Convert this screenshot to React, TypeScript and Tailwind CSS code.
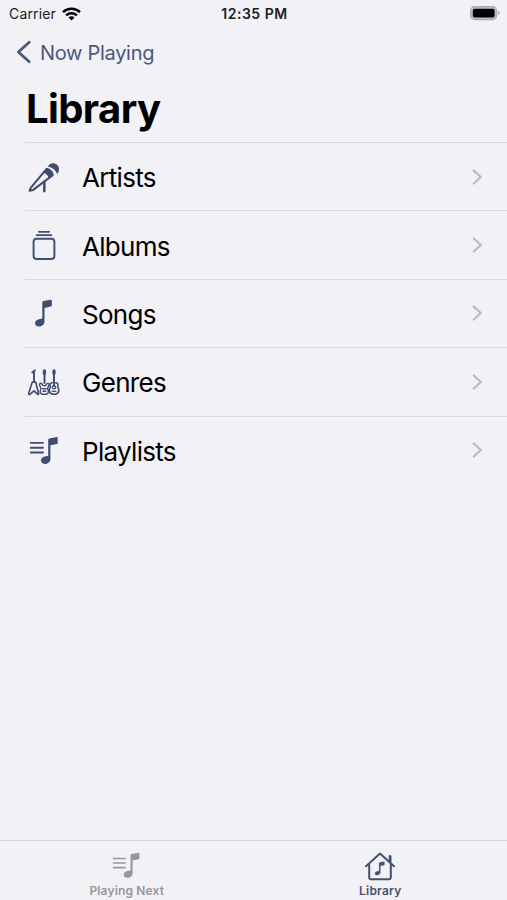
import type { ReactNode } from "react";

const NOTE = "M22.3 12.9 Q22.4 11.9 23.4 11.6 L30.8 10.2 Q31.8 10 31.8 11 L31.8 16 Q31.8 16.9 30.9 17.1 L24.5 18.4 L24.5 32 C24.5 35.3 21.5 37 18.8 37 C16.5 37 15 35.6 15 33.7 C15 31.3 17.3 29.6 20 29.4 L22.3 29.1 Z";

function Icon({ viewBox, children }: { viewBox: string; children: ReactNode }) {
  return (
    <svg
      className="block h-[50px] w-[50px] shrink-0"
      viewBox={viewBox}
      fill="none"
      stroke="currentColor"
      strokeWidth="1.8"
      strokeLinecap="round"
      strokeLinejoin="round"
    >
      {children}
    </svg>
  );
}

function MicIcon() {
  return (
    <Icon viewBox="0 1.4 50 50">
      <path d="M28 16.2 C28.8 13.4 31.8 12 34.7 12.9 C37.9 13.8 39.5 16.8 38.9 19.9 C38.6 21.4 38 22.5 37.1 23.3 C35.6 19.6 32.2 16.6 28 16.2 Z" fill="currentColor" stroke="none" />
      <path d="M26.6 18.2 L10.5 37.5 L9.6 40.2 L12.9 39.5 L32.8 24.5 C32.2 21.5 29.8 18.9 26.6 18.2 Z" strokeWidth="2" />
      <path d="M26.6 18.2 L23.6 21.8 C26 22.3 28.3 24.2 29 27.3 L32.8 24.5 C32.2 21.5 29.8 18.9 26.6 18.2 Z" fill="currentColor" strokeWidth="1" />
      <path d="M24.3 31 V40.5" strokeWidth="2.6" />
    </Icon>
  );
}

function AlbumIcon() {
  return (
    <Icon viewBox="0 -1.8 50 50">
      <path d="M18.8 10 H29.2 M16.7 13.4 H31.3" strokeWidth="1.7" />
      <rect x="13.6" y="17" width="20.8" height="20.2" rx="3" strokeWidth="1.9" />
    </Icon>
  );
}

function SongIcon() {
  return (
    <Icon viewBox="0 -1.5 50 50">
      <path d={NOTE} fill="currentColor" stroke="none" />
    </Icon>
  );
}

function GenreIcon() {
  return (
    <Icon viewBox="0 -1 50 50">
      {/* flying V */}
      <path d="M14 13 V24" strokeWidth="1.9" />
      <path d="M12.2 14.5 L15 12.4" strokeWidth="1.8" />
      <path d="M12.3 24 L8.6 35.6 Q8.7 37 10.2 36.2 L14 32.9 L17.5 36.2 Q19 37 18.6 35.5 L15.7 24 Z" strokeWidth="1.6" />
      {/* electric */}
      <path d="M24.5 13.5 V25" strokeWidth="1.9" />
      <path d="M24.4 12.9 V15.5" strokeWidth="3.2" />
      <path d="M21.5 25.5 Q19.2 24.5 19.7 27.5 L21 30.5 L20.2 33.3 Q20 36.4 24.4 36.4 Q28.8 36.4 28.5 33.3 L27.5 30.5 L29 27.1 Q29 24.4 26.6 25.9 L25.8 27.6 H23 Z M22.7 30.8 H26.1 M23 33.2 H25.8" strokeWidth="1.4" />
      {/* acoustic */}
      <path d="M34 13.5 V28" strokeWidth="1.9" />
      <path d="M34 12.9 V15.5" strokeWidth="3.2" />
      <path d="M32.2 24.8 C30 24.5 29.5 27 30.5 29 C28.5 31.2 28.8 36.3 34 36.3 C39.4 36.3 39.8 31.2 37.5 29 C38.5 26.8 38 24.5 35.8 24.8" strokeWidth="1.6" />
      <path d="M32.2 33.3 H35.8" strokeWidth="1.3" />
      <circle cx="34" cy="29.2" r="1.6" strokeWidth="1.2" />
    </Icon>
  );
}

function PlaylistIcon() {
  return (
    <Icon viewBox="0 -0.9 50 50">
      <path d="M10.8 17 H23 M10.8 21.8 H23 M10.8 26.6 H23" strokeWidth="1.9" />
      <path d={NOTE} transform="translate(5.9 1)" fill="currentColor" stroke="none" />
    </Icon>
  );
}

const rows = [
  { label: "Artists", icon: <MicIcon /> },
  { label: "Albums", icon: <AlbumIcon /> },
  { label: "Songs", icon: <SongIcon /> },
  { label: "Genres", icon: <GenreIcon /> },
  { label: "Playlists", icon: <PlaylistIcon /> },
];

function StatusBar() {
  return (
    <div className="grid h-7 grid-cols-3 items-center pl-[9px] pr-[7px] text-[14px] text-[#202024]">
      <div className="flex items-center gap-[6px]">
        <span className="-mt-[2px] tracking-[0.15px]">Carrier</span>
        <svg className="-mt-px h-[14px] w-[19px]" viewBox="0 0 19 14" fill="none" stroke="#000" strokeWidth="2.5">
          <path d="M1 5.1 C5.8 .6 13.2 .6 18 5.1" />
          <path d="M4.1 8.4 C7.2 5.6 11.8 5.6 14.9 8.4" />
          <path d="M6.5 10.5 Q9.5 8.2 12.5 10.5 L9.5 13.6 Z" fill="#000" stroke="none" />
        </svg>
      </div>
      <div className="-mt-[2px] whitespace-nowrap text-center font-semibold tracking-[0.5px]">12:35 PM</div>
      <svg className="-mt-[2px] h-4 w-[31px] justify-self-end" viewBox="0 0 31 16">
        <rect x="1.8" y="1.8" width="25.6" height="12.6" rx="3.8" fill="#c4c4c9" stroke="#aaaab0" strokeWidth="1.5" />
        <rect x="3.8" y="3.7" width="21.8" height="8.8" rx="1.8" fill="#000" />
        <path d="M29 5.8 Q30.8 6.5 30.8 7.8 Q30.8 9.2 29 9.9 Z" fill="#aaaab0" />
      </svg>
    </div>
  );
}

export default function App() {
  return (
    <div className="flex h-[900px] w-[507px] flex-col overflow-hidden bg-[#f1f1f6] font-['Inter',sans-serif] text-black">
      <StatusBar />
      <div className="flex h-12 items-center gap-2 pl-4 text-[#4a587a]">
        <svg className="h-6 w-4" viewBox="0 0 16 24" fill="none" stroke="currentColor" strokeWidth="2.8" strokeLinecap="round" strokeLinejoin="round">
          <path d="M13.2 2.2 L2.4 12 L13.2 21.8" />
        </svg>
        <span className="pt-px text-[20px] tracking-[-0.3px]">Now Playing</span>
      </div>
      <h1 className="h-[66px] pl-[26px] pt-[9px] text-[40px] font-bold leading-[48px] tracking-[-0.6px]">Library</h1>

      <div className="flex flex-1 flex-col">
        {rows.map((row) => (
          <div key={row.label} className="flex h-[68.4px] items-center pl-[25px]">
            <div className="flex h-full flex-1 items-center border-t border-[#d9d9df] pr-[24px]">
              <div className="-ml-[5px] text-[#3e4d70]">{row.icon}</div>
              <span className="ml-[12px] flex-1 pt-[2px] text-[26px] tracking-[-0.7px]">{row.label}</span>
              <svg className="h-4 w-[11px] text-[#b9b9bf]" viewBox="0 0 11 16" fill="none" stroke="currentColor" strokeWidth="2.2" strokeLinecap="round" strokeLinejoin="round">
                <path d="M1.8 1.5 L8.8 8 L1.8 14.5" />
              </svg>
            </div>
          </div>
        ))}
      </div>

      <div className="grid h-[60px] grid-cols-2 border-t border-[#d3d3d8] text-[12px] font-semibold">
        <div className="flex flex-col items-center pt-[10px] text-[#97979c]">
          <svg className="h-[31px] w-[31px]" viewBox="8 9 33 33" fill="none" stroke="currentColor" strokeLinecap="round">
            <path d="M10.8 17 H23 M10.8 21.8 H23 M10.8 26.6 H23" strokeWidth="1.8" />
            <path d={NOTE} transform="translate(6.5 0.6)" fill="currentColor" stroke="none" />
          </svg>
          <span className="leading-[18px] tracking-[0.15px]">Playing Next</span>
        </div>
        <div className="flex flex-col items-center pt-[10px] text-[#44526f]">
          <svg className="h-[31px] w-[32px]" viewBox="0 0 32 31" fill="none" stroke="currentColor" strokeWidth="2" strokeLinecap="round" strokeLinejoin="round">
            <path d="M2 15.2 L16 2.6 L30 15.2" />
            <path d="M5.2 13.5 V26.3 Q5.2 28.3 7.2 28.3 H24.8 Q26.8 28.3 26.8 26.3 V13.5" />
            <path d="M26.1 5.4 V10.8" strokeWidth="2.8" />
            <path d={NOTE} transform="translate(2.6 5.6) scale(.56 .5)" fill="currentColor" strokeWidth=".6" />
          </svg>
          <span className="leading-[18px] tracking-[0.2px]">Library</span>
        </div>
      </div>
    </div>
  );
}
